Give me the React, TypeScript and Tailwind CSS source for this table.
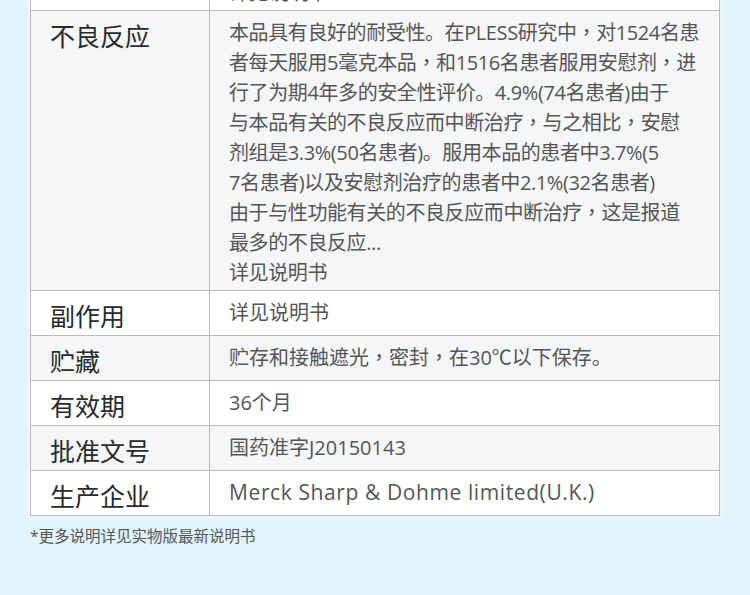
const adverse = [
  '本品具有良好的耐受性。在PLESS研究中，对1524名患',
  '者每天服用5毫克本品，和1516名患者服用安慰剂，进',
  '行了为期4年多的安全性评价。4.9%(74名患者)由于',
  '与本品有关的不良反应而中断治疗，与之相比，安慰',
  '剂组是3.3%(50名患者)。服用本品的患者中3.7%(5',
  '7名患者)以及安慰剂治疗的患者中2.1%(32名患者)',
  '由于与性功能有关的不良反应而中断治疗，这是报道',
  '最多的不良反应...',
  '详见说明书',
];

const rows = [
  { label: '副作用', value: '详见说明书', shade: false },
  { label: '贮藏', value: '贮存和接触遮光，密封，在30℃以下保存。', shade: true },
  { label: '有效期', value: '36个月', shade: false },
  { label: '批准文号', value: '国药准字J20150143', shade: true },
  { label: '生产企业', value: 'Merck Sharp & Dohme limited(U.K.)', shade: false },
];

const font = { fontFamily: '"Open Sans", "Noto Sans CJK SC", sans-serif' };
const tcFont = { fontFamily: '"Noto Sans CJK TC", sans-serif' };

// full-width commas sit in the middle of their cell in the reference
const Text = ({ text }: { text: string }) => {
  const parts = text.split('，');
  return (
    <>
      {parts.map((part, i) => (
        <span key={i}>
          {part}
          {i < parts.length - 1 && (
            <span className="leading-[0]" style={tcFont}>
              ，
            </span>
          )}
        </span>
      ))}
    </>
  );
};

export default function App() {
  return (
    <div className="h-[595px] w-[750px] overflow-hidden bg-[#e1f4fc]" style={font}>
      <div className="mx-[30px]">
        <div className="border-x border-b border-[#bcbcbc] shadow-[0_0_5px_2px_rgba(255,255,255,0.5)]">
          {/* cut-off row at the top */}
          <div className="grid h-[10px] grid-cols-[179px_1fr] overflow-hidden bg-white">
            <div className="border-r border-[#bcbcbc]" />
            <div className="-mt-[22px] pl-[19px] text-[20px] leading-[30px] text-[#555]">详见说明书</div>
          </div>

          <div className="grid grid-cols-[179px_1fr] border-t border-[#bcbcbc] bg-[#f5f6f7]">
            <div className="border-r border-[#bcbcbc] pl-[19px] pt-[10px] text-[25px] leading-[30px] text-[#2a2a2a]">
              不良反应
            </div>
            <div className="pb-[2px] pl-[19px] pt-[7px] text-[20px] leading-[30px] tracking-[-0.4px] text-[#555]">
              {adverse.map((line) => (
                <div key={line} className="h-[30px] whitespace-nowrap">
                  <Text text={line} />
                </div>
              ))}
            </div>
          </div>

          {rows.map((row) => (
            <div
              key={row.label}
              className={`grid h-[45px] grid-cols-[179px_1fr] border-t border-[#bcbcbc] ${row.shade ? 'bg-[#f5f6f7]' : 'bg-white'}`}
            >
              <div className="border-r border-[#bcbcbc] pl-[19px] pt-[10px] text-[25px] leading-[30px] text-[#2a2a2a]">
                {row.label}
              </div>
              {row.label === '生产企业' ? (
                <div className="whitespace-nowrap pl-[19px] pt-[6px] text-[21px] leading-[30px] tracking-[0.6px] text-[#555]">
                  {row.value}
                </div>
              ) : (
                <div className="h-[44px] whitespace-nowrap pl-[19px] pt-[7px] text-[20px] leading-[30px] text-[#555]">
                  <Text text={row.value} />
                </div>
              )}
            </div>
          ))}
        </div>

        <p className="mt-[10px] text-[15.5px] leading-[20px] text-[#555]">*更多说明详见实物版最新说明书</p>
      </div>
    </div>
  );
}
